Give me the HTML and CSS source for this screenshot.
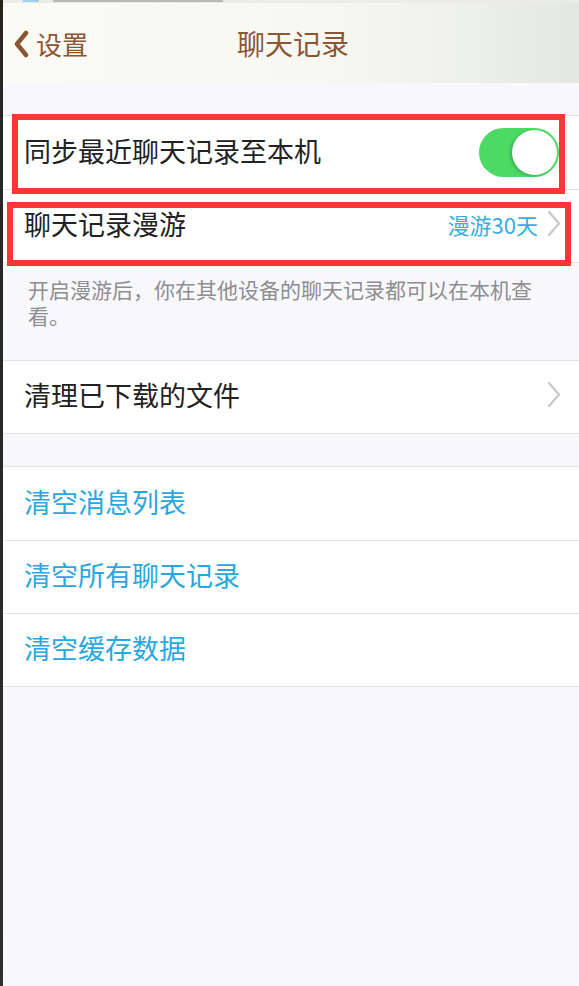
FILE: index.html
```html
<!DOCTYPE html>
<html lang="zh-CN">
<head>
<meta charset="utf-8">
<title>聊天记录</title>
<link rel="stylesheet" href="styles.css">
</head>
<body>
<div class="frame">
  <div class="edge"></div>
  <div class="screen">
    <div class="topstrip"><span class="strip-icon"></span><span class="strip-text"></span></div>
    <header class="nav">
      <div class="back">
        <svg class="back-icon" width="18" height="28" viewBox="0 0 18 28"><path d="M14 3 L5 14 L14 25" fill="none" stroke="#8a5634" stroke-width="4.5" stroke-linecap="round" stroke-linejoin="round"/></svg>
        <span>设置</span>
      </div>
      <div class="title">聊天记录</div>
      <div></div>
    </header>

    <div class="spacer-top"></div>

    <section class="group">
      <div class="row row-sync">
        <span class="label">同步最近聊天记录至本机</span>
        <span class="toggle"><span class="knob"></span></span>
        <span class="mark mark-sync"></span>
      </div>
      <div class="row row-roam">
        <span class="label">聊天记录漫游</span>
        <span class="detail">漫游30天</span>
        <svg class="chev" width="14" height="27" viewBox="0 0 14 27"><polyline points="2,2 12,13.5 2,25" fill="none" stroke="#c7c7cc" stroke-width="2.2" stroke-linecap="round" stroke-linejoin="round"/></svg>
        <span class="mark mark-roam"></span>
      </div>
    </section>

    <p class="footnote">开启漫游后，你在其他设备的聊天记录都可以在本机查看。</p>

    <section class="group">
      <div class="row row-plain">
        <span class="label">清理已下载的文件</span>
        <svg class="chev" width="14" height="27" viewBox="0 0 14 27"><polyline points="2,2 12,13.5 2,25" fill="none" stroke="#c7c7cc" stroke-width="2.2" stroke-linecap="round" stroke-linejoin="round"/></svg>
      </div>
    </section>

    <div class="spacer-mid"></div>

    <section class="group">
      <div class="row row-action row-first"><span class="label action">清空消息列表</span></div>
      <div class="row row-action"><span class="label action">清空所有聊天记录</span></div>
      <div class="row row-action"><span class="label action">清空缓存数据</span></div>
    </section>
  </div>
</div>
</body>
</html>
```

FILE: styles.css
```css
* { box-sizing: border-box; }
html, body {
  margin: 0;
  padding: 0;
  width: 579px;
  height: 986px;
  overflow: hidden;
  background: #f8f8fa;
  font-family: "Noto Sans CJK SC", "Noto Sans", sans-serif;
}
.frame {
  display: flex;
  height: 986px;
}
.edge {
  width: 3px;
  flex: none;
  background: linear-gradient(to bottom, #2b2218 0%, #262626 10%, #2a2a2a 60%, #303030 100%);
}
.screen {
  flex: 1;
  display: flex;
  flex-direction: column;
  background: #f8f8fa;
}
.topstrip {
  height: 3px;
  background: #ebebea;
  display: flex;
  align-items: flex-start;
  gap: 14px;
  padding-left: 20px;
}
.strip-icon {
  width: 16px;
  height: 2px;
  background: #9fd0ea;
}
.strip-text {
  width: 170px;
  height: 2px;
  background: #b9b9b6;
}
.nav {
  height: 80px;
  display: grid;
  grid-template-columns: 1fr auto 1fr;
  align-items: center;
  background: linear-gradient(to right, #fbfbf6 0%, #f8f8f2 55%, #eef0ea 80%, #e3e8e1 100%);
  color: #8a5634;
}
.back {
  display: flex;
  align-items: center;
  gap: 6px;
  padding-left: 9px;
  font-size: 26px;
  line-height: 1;
  margin-top: 2px;
}
.back-icon { flex: none; }
.title {
  font-size: 28px;
  line-height: 1;
  padding-left: 4px;
}
.spacer-top { height: 32px; }
.spacer-mid { height: 32px; }
.group {
  background: #fff;
  border-top: 1px solid #e3e3e6;
  border-bottom: 1px solid #e3e3e6;
}
.row {
  position: relative;
  height: 72px;
  display: flex;
  align-items: center;
  padding: 0 18px 5px 21px;
  font-size: 27px;
  color: #222;
}
.row + .row {
  border-top: 1px solid #e3e3e6;
  height: 73px;
}
.row-sync { height: 73px; padding-right: 20px; }
.row-first { height: 73px; }
.label { flex: 1; line-height: 1; }
.label.action { color: #2aa7df; }
.detail {
  font-size: 22px;
  color: #35ade2;
  margin-right: 9px;
  line-height: 1;
}
.chev { flex: none; }
.toggle {
  position: relative;
  width: 80px;
  height: 49px;
  border-radius: 25px;
  background: #4cd964;
  display: flex;
  justify-content: flex-end;
  align-items: center;
  padding: 2px;
  margin-top: 5px;
}
.knob {
  width: 45px;
  height: 45px;
  border-radius: 50%;
  background: #fff;
  box-shadow: -2px 1px 3px rgba(0,0,0,0.18);
}
.mark {
  position: absolute;
  z-index: 2;
  border: 6px solid #fc3636;
  pointer-events: none;
}
.mark-sync {
  left: 9px;
  top: -2px;
  width: 553px;
  height: 80px;
}
.mark-roam {
  left: 4px;
  top: 12px;
  width: 564px;
  height: 64px;
}
.footnote {
  margin: 0;
  padding: 13px 36px 32px 25px;
  font-size: 21px;
  line-height: 26px;
  color: #8d8d92;
}
```
